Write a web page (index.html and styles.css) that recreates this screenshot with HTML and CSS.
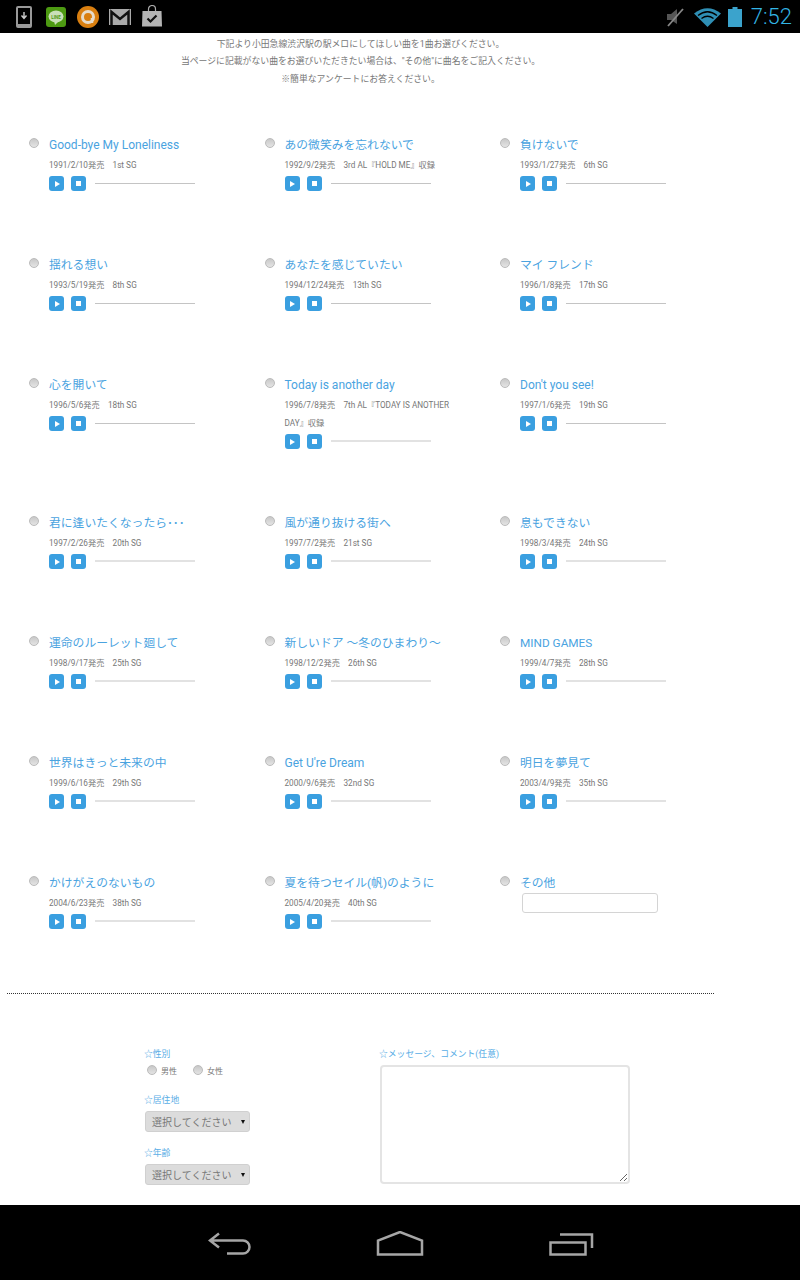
FILE: index.html
```html
<!DOCTYPE html>
<html lang="ja">
<head>
  <meta charset="UTF-8" />
  <title>駅メロ アンケート</title>
  <link rel="stylesheet" href="styles.css">
</head>
<body>

<!-- ステータスバー -->
<div class="status-bar">
  <div class="status-left">
    <svg class="icon-dl" width="16" height="22" viewBox="0 0 16 22">
      <rect x="1" y="1" width="14" height="20" rx="1" fill="#000" stroke="#999" stroke-width="2"/>
      <rect x="1" y="18" width="14" height="3" fill="#999"/>
      <path d="M8 6v6M5.500 9.500l2.500 3 2.500-3" fill="none" stroke="#ccc" stroke-width="1.400"/>
    </svg>
    <svg class="icon-line" width="20" height="20" viewBox="0 0 20 20">
      <rect width="20" height="20" rx="3" fill="#4d9a12"/>
      <ellipse cx="10" cy="9.500" rx="7.500" ry="6" fill="#c9dfb8"/>
      <path d="M8 14l1 4 4-4z" fill="#c9dfb8"/>
      <text x="10" y="11.500" class="line-text">LINE</text>
    </svg>
    <svg class="icon-orange" width="22" height="22" viewBox="0 0 22 22">
      <circle cx="11" cy="11" r="11" fill="#d97f10"/>
      <circle cx="11" cy="11" r="5.500" fill="none" stroke="#e6dccb" stroke-width="3"/>
      <path d="M15 12v5" stroke="#e6dccb" stroke-width="2.500"/>
    </svg>
    <svg class="icon-mail" width="22" height="16" viewBox="0 0 22 16">
      <rect width="22" height="16" fill="#aaa"/>
      <path d="M2.500 16V3l8.500 7 8.500-7v13" fill="none" stroke="#111" stroke-width="2.500"/>
    </svg>
    <svg class="icon-bag" width="20" height="22" viewBox="0 0 20 22">
      <path d="M6.500 6V4a3.500 3.500 0 0 1 7 0v2" fill="none" stroke="#aaa" stroke-width="1.200"/>
      <path d="M0.500 6h19l0.500 15.500H0z" fill="#b4b4b4"/>
      <path d="M5.500 13.500l3 3 6-6" fill="none" stroke="#111" stroke-width="2.200"/>
    </svg>
  </div>
  <div class="status-right">
    <svg class="icon-mute" width="20" height="20" viewBox="0 0 20 20">
      <path d="M2 7h4l6-5v15l-6-4H2z" fill="#555"/>
      <path d="M3 19L18 2" stroke="#888" stroke-width="1.800"/>
    </svg>
    <svg class="icon-wifi" width="27" height="20" viewBox="0 0 27 20">
      <path d="M0 6.500Q13.500-4 27 6.500L13.500 20z" fill="#2f8fb5"/>
      <path d="M4 8.500Q13.500 1 23 8.500M7.500 11.500Q13.500 7 19.500 11.500" fill="none" stroke="#000" stroke-width="1.300"/>
    </svg>
    <svg class="icon-battery" width="14" height="20" viewBox="0 0 14 20">
      <path d="M4.500 0h5v2H14v18H0V2h4.500z" fill="#3ba3cc"/>
    </svg>
    <span class="clock">7:52</span>
  </div>
</div>

<div class="page">
  <div class="container">

    <div class="intro">
      <p>下記より小田急線渋沢駅の駅メロにしてほしい曲を1曲お選びください。</p>
      <p>当ページに記載がない曲をお選びいただきたい場合は、"その他"に曲名をご記入ください。</p>
      <p>※簡単なアンケートにお答えください。</p>
    </div>

    <div class="song-grid">

      <div class="song">
        <input type="radio" name="song" class="radio">
        <div class="song-body">
          <div class="song-title">Good-bye My Loneliness</div>
          <div class="song-info">1991/2/10発売　1st SG</div>
          <div class="player"><span class="btn play"></span><span class="btn stop"></span><span class="bar"></span></div>
        </div>
      </div>
      <div class="song">
        <input type="radio" name="song" class="radio">
        <div class="song-body">
          <div class="song-title ja">あの微笑みを忘れないで</div>
          <div class="song-info">1992/9/2発売　3rd AL『HOLD ME』収録</div>
          <div class="player"><span class="btn play"></span><span class="btn stop"></span><span class="bar"></span></div>
        </div>
      </div>
      <div class="song">
        <input type="radio" name="song" class="radio">
        <div class="song-body">
          <div class="song-title ja">負けないで</div>
          <div class="song-info">1993/1/27発売　6th SG</div>
          <div class="player"><span class="btn play"></span><span class="btn stop"></span><span class="bar"></span></div>
        </div>
      </div>

      <div class="song">
        <input type="radio" name="song" class="radio">
        <div class="song-body">
          <div class="song-title ja">揺れる想い</div>
          <div class="song-info">1993/5/19発売　8th SG</div>
          <div class="player"><span class="btn play"></span><span class="btn stop"></span><span class="bar"></span></div>
        </div>
      </div>
      <div class="song">
        <input type="radio" name="song" class="radio">
        <div class="song-body">
          <div class="song-title ja">あなたを感じていたい</div>
          <div class="song-info">1994/12/24発売　13th SG</div>
          <div class="player"><span class="btn play"></span><span class="btn stop"></span><span class="bar"></span></div>
        </div>
      </div>
      <div class="song">
        <input type="radio" name="song" class="radio">
        <div class="song-body">
          <div class="song-title ja">マイ フレンド</div>
          <div class="song-info">1996/1/8発売　17th SG</div>
          <div class="player"><span class="btn play"></span><span class="btn stop"></span><span class="bar"></span></div>
        </div>
      </div>

      <div class="song">
        <input type="radio" name="song" class="radio">
        <div class="song-body">
          <div class="song-title ja">心を開いて</div>
          <div class="song-info">1996/5/6発売　18th SG</div>
          <div class="player"><span class="btn play"></span><span class="btn stop"></span><span class="bar"></span></div>
        </div>
      </div>
      <div class="song">
        <input type="radio" name="song" class="radio">
        <div class="song-body">
          <div class="song-title">Today is another day</div>
          <div class="song-info">1996/7/8発売　7th AL『TODAY IS ANOTHER DAY』収録</div>
          <div class="player"><span class="btn play"></span><span class="btn stop"></span><span class="bar soft"></span></div>
        </div>
      </div>
      <div class="song">
        <input type="radio" name="song" class="radio">
        <div class="song-body">
          <div class="song-title">Don't you see!</div>
          <div class="song-info">1997/1/6発売　19th SG</div>
          <div class="player"><span class="btn play"></span><span class="btn stop"></span><span class="bar"></span></div>
        </div>
      </div>

      <div class="song">
        <input type="radio" name="song" class="radio">
        <div class="song-body">
          <div class="song-title ja">君に逢いたくなったら･･･</div>
          <div class="song-info">1997/2/26発売　20th SG</div>
          <div class="player"><span class="btn play"></span><span class="btn stop"></span><span class="bar soft"></span></div>
        </div>
      </div>
      <div class="song">
        <input type="radio" name="song" class="radio">
        <div class="song-body">
          <div class="song-title ja">風が通り抜ける街へ</div>
          <div class="song-info">1997/7/2発売　21st SG</div>
          <div class="player"><span class="btn play"></span><span class="btn stop"></span><span class="bar soft"></span></div>
        </div>
      </div>
      <div class="song">
        <input type="radio" name="song" class="radio">
        <div class="song-body">
          <div class="song-title ja">息もできない</div>
          <div class="song-info">1998/3/4発売　24th SG</div>
          <div class="player"><span class="btn play"></span><span class="btn stop"></span><span class="bar soft"></span></div>
        </div>
      </div>

      <div class="song">
        <input type="radio" name="song" class="radio">
        <div class="song-body">
          <div class="song-title ja">運命のルーレット廻して</div>
          <div class="song-info">1998/9/17発売　25th SG</div>
          <div class="player"><span class="btn play"></span><span class="btn stop"></span><span class="bar soft"></span></div>
        </div>
      </div>
      <div class="song">
        <input type="radio" name="song" class="radio">
        <div class="song-body">
          <div class="song-title ja">新しいドア 〜冬のひまわり〜</div>
          <div class="song-info">1998/12/2発売　26th SG</div>
          <div class="player"><span class="btn play"></span><span class="btn stop"></span><span class="bar soft"></span></div>
        </div>
      </div>
      <div class="song">
        <input type="radio" name="song" class="radio">
        <div class="song-body">
          <div class="song-title ja">MIND GAMES</div>
          <div class="song-info">1999/4/7発売　28th SG</div>
          <div class="player"><span class="btn play"></span><span class="btn stop"></span><span class="bar soft"></span></div>
        </div>
      </div>

      <div class="song">
        <input type="radio" name="song" class="radio">
        <div class="song-body">
          <div class="song-title ja">世界はきっと未来の中</div>
          <div class="song-info">1999/6/16発売　29th SG</div>
          <div class="player"><span class="btn play"></span><span class="btn stop"></span><span class="bar soft"></span></div>
        </div>
      </div>
      <div class="song">
        <input type="radio" name="song" class="radio">
        <div class="song-body">
          <div class="song-title">Get U're Dream</div>
          <div class="song-info">2000/9/6発売　32nd SG</div>
          <div class="player"><span class="btn play"></span><span class="btn stop"></span><span class="bar soft"></span></div>
        </div>
      </div>
      <div class="song">
        <input type="radio" name="song" class="radio">
        <div class="song-body">
          <div class="song-title ja">明日を夢見て</div>
          <div class="song-info">2003/4/9発売　35th SG</div>
          <div class="player"><span class="btn play"></span><span class="btn stop"></span><span class="bar soft"></span></div>
        </div>
      </div>

      <div class="song">
        <input type="radio" name="song" class="radio">
        <div class="song-body">
          <div class="song-title ja">かけがえのないもの</div>
          <div class="song-info">2004/6/23発売　38th SG</div>
          <div class="player"><span class="btn play"></span><span class="btn stop"></span><span class="bar soft"></span></div>
        </div>
      </div>
      <div class="song">
        <input type="radio" name="song" class="radio">
        <div class="song-body">
          <div class="song-title ja">夏を待つセイル(帆)のように</div>
          <div class="song-info">2005/4/20発売　40th SG</div>
          <div class="player"><span class="btn play"></span><span class="btn stop"></span><span class="bar soft"></span></div>
        </div>
      </div>
      <div class="song">
        <input type="radio" name="song" class="radio">
        <div class="song-body">
          <div class="song-title ja">その他</div>
          <input type="text" class="other-input">
        </div>
      </div>

    </div>

    <div class="divider"></div>

    <form class="survey">
      <div class="survey-left">
        <div class="field-label">☆性別</div>
        <div class="gender-row">
          <label class="gender"><input type="radio" name="sex" class="radio"><span>男性</span></label>
          <label class="gender"><input type="radio" name="sex" class="radio"><span>女性</span></label>
        </div>
        <div class="field-label">☆居住地</div>
        <div class="select-box">選択してください<span class="arrow"></span></div>
        <div class="field-label">☆年齢</div>
        <div class="select-box">選択してください<span class="arrow"></span></div>
      </div>
      <div class="survey-right">
        <div class="field-label">☆メッセージ、コメント(任意)</div>
        <textarea class="message"></textarea>
      </div>
    </form>

  </div>
</div>

<!-- ナビゲーションバー -->
<div class="nav-bar">
  <svg width="44" height="24" viewBox="0 0 44 24">
    <path d="M11 1.500L2 8.500l9 7M2 8.500h33a6.500 6.500 0 0 1 0 13H19" fill="none" stroke="#a6a6a6" stroke-width="2.500"/>
  </svg>
  <svg width="48" height="26" viewBox="0 0 48 26">
    <path d="M2 23.500V9.500L24 1 46 9.500v14z" fill="none" stroke="#a6a6a6" stroke-width="2.500"/>
  </svg>
  <svg width="46" height="24" viewBox="0 0 46 24">
    <rect x="2.500" y="10.500" width="35" height="12" fill="none" stroke="#a6a6a6" stroke-width="2.500"/>
    <path d="M12 2.500H44V16" fill="none" stroke="#a6a6a6" stroke-width="2.500"/>
  </svg>
</div>

</body>
</html>
```

FILE: styles.css
```css
body {
  font-family: Roboto, "Noto Sans CJK JP", sans-serif;
  background-color: #fff;
  margin: 0;
  width: 800px;
  height: 1280px;
  display: flex;
  flex-direction: column;
  overflow: hidden;
}

/* status bar */
.status-bar {
  height: 33px;
  flex: none;
  background-color: #000;
  display: flex;
  justify-content: space-between;
  align-items: center;
}

.status-left {
  display: flex;
  align-items: center;
  padding-left: 16px;
}

.icon-line { margin-left: 14px; }
.icon-orange { margin-left: 11px; }
.icon-mail { margin-left: 10px; }
.icon-bag { margin-left: 11px; margin-top: -2px; }

.line-text {
  font-size: 4.500px;
  font-weight: 700;
  fill: #4d9a12;
  text-anchor: middle;
}

.status-right {
  display: flex;
  align-items: center;
  padding-right: 8px;
}

.icon-wifi { margin-left: 9px; }
.icon-battery { margin-left: 7px; }

.clock {
  margin-left: 9px;
  font-size: 22px;
  font-weight: 300;
  color: #33b5e5;
  line-height: 33px;
}

/* page */
.page {
  flex: 1;
  overflow: hidden;
}

.container {
  width: 707px;
  margin-left: 7px;
}

.intro {
  padding-top: 2.500px;
  text-align: center;
  font-size: 8.850px;
  line-height: 17.500px;
  color: #777;
}

.intro p {
  margin: 0;
}

.song-grid {
  display: grid;
  grid-template-columns: repeat(3, 235.500px);
  row-gap: 65px;
  padding: 48px 0 64px 22px;
}

.song {
  display: flex;
  align-items: flex-start;
}

.radio {
  appearance: none;
  -webkit-appearance: none;
  flex: none;
  width: 10px;
  height: 10px;
  margin: 2px 10px 0 0;
  border-radius: 50%;
  border: 1px solid #bbb;
  background: linear-gradient(#c8c8c8, #e4e4e4);
  box-sizing: border-box;
}

.song-title {
  margin-top: 1px;
  font-size: 12px;
  line-height: 16px;
  color: #4aa3df;
}

.song-title.ja {
  font-size: 11.800px;
}

.song-info {
  margin-top: 3px;
  font-size: 8.200px;
  line-height: 18px;
  color: #777;
  width: 175px;
}

.player {
  margin-top: 2px;
  display: flex;
  align-items: center;
}

.btn {
  width: 15px;
  height: 15px;
  border-radius: 3px;
  background-color: #3a9fe0;
  margin-right: 7px;
  display: flex;
  align-items: center;
  justify-content: center;
}

.play::before {
  content: "";
  border-left: 5px solid #fff;
  border-top: 3px solid transparent;
  border-bottom: 3px solid transparent;
  margin-left: 1px;
}

.stop::before {
  content: "";
  width: 5px;
  height: 5px;
  background-color: #fff;
}

.bar {
  width: 100px;
  height: 1px;
  margin-left: 2px;
  background-color: #c4c4c4;
}

.bar.soft {
  height: 2px;
  margin-bottom: 1px;
  background-color: #e2e2e2;
}

.other-input {
  display: block;
  width: 136px;
  height: 20px;
  box-sizing: border-box;
  margin: 2px 0 0 2px;
  border: 1px solid #d4d4d4;
  border-radius: 3px;
  background-color: #fff;
}

.divider {
  border-top: 1px dotted #333;
}

/* survey form */
.survey {
  display: flex;
  padding: 54px 0 0 137px;
}

.survey-left {
  width: 235px;
}

.field-label {
  font-size: 8.800px;
  line-height: 12px;
  color: #5aaee6;
}

.gender-row {
  display: flex;
  height: 29px;
  padding: 5px 0 0 3px;
  gap: 16px;
}

.gender {
  display: flex;
  align-items: flex-start;
  font-size: 8px;
  color: #777;
  line-height: 13px;
}

.gender .radio {
  margin: 0 4px 0 0;
}

.select-box {
  width: 105px;
  height: 21px;
  box-sizing: border-box;
  margin: 5px 0 15px 1px;
  padding-left: 6px;
  display: flex;
  align-items: center;
  justify-content: space-between;
  font-size: 10px;
  color: #777;
  background-color: #dcdcdc;
  border: 1px solid #d0d0d0;
  border-radius: 3px;
}

.arrow {
  border-top: 4px solid #111;
  border-left: 2.500px solid transparent;
  border-right: 2.500px solid transparent;
  margin-right: 4px;
}

.survey-right .message {
  display: block;
  width: 250px;
  height: 119px;
  box-sizing: border-box;
  margin: 5px 0 0 1px;
  border: 2px solid #e4e4e4;
  border-radius: 4px;
  background-color: #fff;
}

/* navigation bar */
.nav-bar {
  height: 75px;
  flex: none;
  background-color: #000;
  display: flex;
  justify-content: center;
  align-items: center;
  gap: 124px;
  padding: 3px 0 0 2px;
  box-sizing: border-box;
}
```
